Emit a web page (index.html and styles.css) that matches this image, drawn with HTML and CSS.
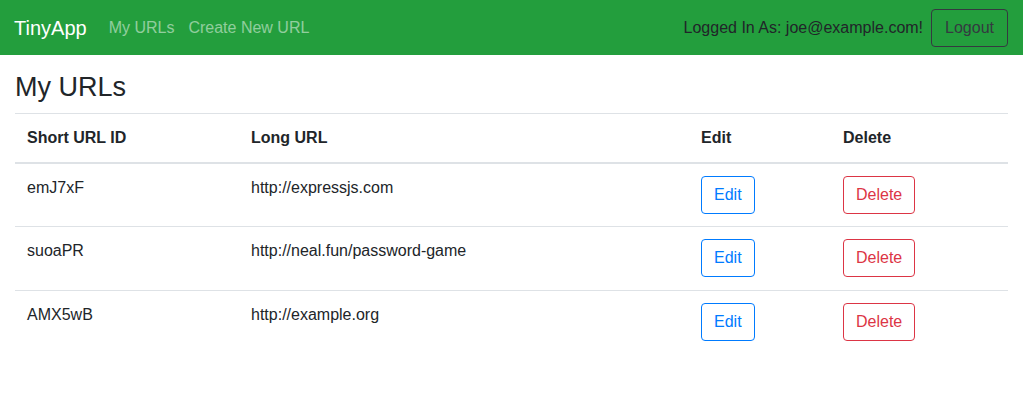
FILE: index.html
```html
<!DOCTYPE html>
<html lang="en">
<head>
<meta charset="utf-8">
<title>TinyApp</title>
<link rel="stylesheet" href="styles.css">
</head>
<body>
<nav class="navbar">
  <div class="nav-left">
    <a class="brand" href="#">TinyApp</a>
    <a class="nav-link" href="#">My URLs</a>
    <a class="nav-link" href="#">Create New URL</a>
  </div>
  <div class="nav-right">
    <span class="nav-text">Logged In As: joe@example.com!</span>
    <button class="btn btn-dark">Logout</button>
  </div>
</nav>
<main class="container">
  <h3 class="title">My URLs</h3>
  <table class="table">
    <thead>
      <tr>
        <th class="c1">Short URL ID</th>
        <th class="c2">Long URL</th>
        <th class="c3">Edit</th>
        <th class="c4">Delete</th>
      </tr>
    </thead>
    <tbody>
      <tr>
        <td>emJ7xF</td>
        <td>http://expressjs.com</td>
        <td><button class="btn btn-primary">Edit</button></td>
        <td><button class="btn btn-danger">Delete</button></td>
      </tr>
      <tr>
        <td>suoaPR</td>
        <td>http://neal.fun/password-game</td>
        <td><button class="btn btn-primary">Edit</button></td>
        <td><button class="btn btn-danger">Delete</button></td>
      </tr>
      <tr>
        <td>AMX5wB</td>
        <td>http://example.org</td>
        <td><button class="btn btn-primary">Edit</button></td>
        <td><button class="btn btn-danger">Delete</button></td>
      </tr>
    </tbody>
  </table>
</main>
</body>
</html>
```
FILE: styles.css
```css
* { box-sizing: border-box; }
html, body { margin: 0; padding: 0; }
body {
  font-family: "Liberation Sans", Arial, sans-serif;
  font-size: 16px;
  line-height: 1.5;
  color: #212529;
  background: #fff;
}
.navbar {
  display: flex;
  align-items: center;
  justify-content: space-between;
  background: #239e3d;
  padding: 8px 15px 8px 14px;
  height: 55px;
}
.nav-left { display: flex; align-items: center; }
.brand {
  color: #fff;
  font-size: 20px;
  text-decoration: none;
  margin-right: 15px;
  line-height: 30px;
}
.nav-link {
  color: rgba(255,255,255,0.5);
  text-decoration: none;
  padding: 8px 7px;
}
.nav-right { display: flex; align-items: center; }
.nav-text { margin-right: 8px; color: #212529; }
.btn {
  font-family: inherit;
  font-size: 16px;
  line-height: 24px;
  padding: 6px 12px;
  border-radius: 4px;
  background: transparent;
  border: 1px solid;
  cursor: pointer;
}
.btn-dark { color: #343a40; border-color: #343a40; padding: 6px 13px; }
.btn-primary { color: #007bff; border-color: #007bff; }
.btn-danger { color: #dc3545; border-color: #dc3545; }
.container { padding: 0 15px; }
.title {
  font-size: 27px;
  font-weight: 500;
  line-height: 1.25;
  margin: 16px 0 8px;
}
.table {
  width: 100%;
  border-collapse: collapse;
}
.table th, .table td {
  text-align: left;
  vertical-align: top;
  padding: 12px;
  border-top: 1px solid #dee2e6;
}
.table tbody td { height: 64px; }
.table thead th {
  border-bottom: 2px solid #dee2e6;
  font-weight: bold;
}
.c1 { width: 224px; }
.c2 { width: 450px; }
.c3 { width: 142px; }
```
